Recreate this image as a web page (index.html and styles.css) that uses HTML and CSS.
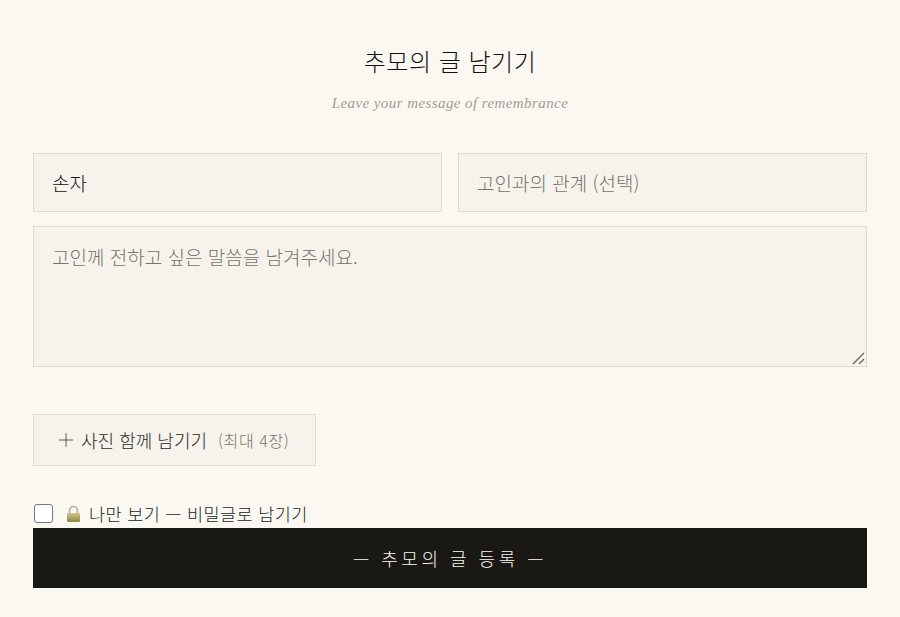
FILE: index.html
```html
<!DOCTYPE html>
<html lang="ko">
<head>
    <meta charset="UTF-8">
    <meta name="viewport" content="width=device-width, initial-scale=1.0">
    <title>추모의 글 남기기</title>
    <link rel="stylesheet" href="styles.css">
</head>
<body>
    <section class="guestbook">
        <h2 class="title">추모의 글 남기기</h2>
        <p class="subtitle">Leave your message of remembrance</p>
        <form class="form">
            <div class="row">
                <input class="field" type="text" value="손자" placeholder="이름">
                <input class="field" type="text" placeholder="고인과의 관계 (선택)">
            </div>
            <div class="message-wrap">
                <textarea class="field message" placeholder="고인께 전하고 싶은 말씀을 남겨주세요."></textarea>
                <svg class="grip" width="13" height="13" viewBox="0 0 13 13"><path d="M1 12L12 1M7 12l5-5" stroke="#66635c" stroke-width="1.3" fill="none"/></svg>
            </div>
            <button class="photo-btn" type="button">
                <svg class="plus" width="14" height="14" viewBox="0 0 14 14"><path d="M7 0v14M0 7h14" stroke="#5e5a52" stroke-width="1" fill="none"/></svg>
                <span>사진 함께 남기기</span>
                <span class="photo-note">(최대 4장)</span>
            </button>
            <label class="secret">
                <input class="secret-check" type="checkbox">
                <svg class="lock" width="15" height="18" viewBox="0 0 15 18">
                    <defs>
                        <linearGradient id="lockBody" x1="0" y1="0" x2="0" y2="1">
                            <stop offset="0" stop-color="#cfc78a"/>
                            <stop offset="1" stop-color="#8f8748"/>
                        </linearGradient>
                    </defs>
                    <path d="M3.6 8V5.4a3.9 3.9 0 0 1 7.8 0V8" fill="none" stroke="#b5b5ad" stroke-width="1.7"/>
                    <rect x="1" y="8" width="13" height="9" rx="1" fill="url(#lockBody)"/>
                </svg>
                <span>나만 보기 — 비밀글로 남기기</span>
            </label>
            <button class="submit" type="submit">— 추모의 글 등록 —</button>
        </form>
    </section>
</body>
</html>
```

FILE: styles.css
```css
* {
    box-sizing: border-box;
}
body {
    margin: 0;
    background-color: #fbf8f2;
    color: #141210;
    font-family: "Noto Sans CJK KR", "Liberation Serif", sans-serif;
    font-weight: 300;
}
.guestbook {
    padding: 43px 33px 29px;
}
.title {
    margin: 0;
    font-size: 24px;
    line-height: 36px;
    font-weight: 300;
    letter-spacing: 0.5px;
    text-align: center;
}
.subtitle {
    margin: 14px 0 0;
    font-family: "Liberation Serif", serif;
    font-style: italic;
    font-size: 15px;
    line-height: 20px;
    letter-spacing: 0.42px;
    color: #a19c92;
    text-align: center;
}
.form {
    display: flex;
    flex-direction: column;
    margin-top: 40px;
}
.row {
    display: flex;
    gap: 16px;
}
.field {
    flex: 1;
    min-width: 0;
    height: 59px;
    padding: 0 18px;
    background-color: #f6f3ec;
    border: 1px solid #e0dbcf;
    border-radius: 0;
    outline: none;
    color: #141210;
    font-family: inherit;
    font-weight: 300;
    font-size: 19px;
}
.field::placeholder {
    color: #77736b;
    opacity: 1;
}
.message-wrap {
    position: relative;
    margin-top: 14px;
}
.message {
    display: block;
    width: 100%;
    height: 141px;
    padding: 15px 18px;
    line-height: 30px;
    resize: none;
}
.grip {
    position: absolute;
    right: 2px;
    bottom: 2px;
    pointer-events: none;
}
.photo-btn {
    display: flex;
    align-items: center;
    align-self: flex-start;
    width: 283px;
    height: 52px;
    margin-top: 47px;
    padding: 0 25px;
    background-color: #f6f3ec;
    border: 1px solid #e0dbcf;
    color: #2c2a25;
    font-family: inherit;
    font-weight: 300;
    font-size: 18px;
    cursor: pointer;
}
.plus {
    flex: none;
    margin-right: 8px;
}
.photo-note {
    margin-left: 11px;
    color: #77736b;
    font-size: 16px;
    letter-spacing: 0.6px;
}
.secret {
    display: flex;
    align-items: center;
    height: 25px;
    margin-top: 35px;
    color: #201e1a;
    font-size: 17.5px;
    letter-spacing: 0.4px;
}
.secret-check {
    appearance: none;
    width: 19px;
    height: 19px;
    margin: 0 0 0 1px;
    background-color: #fff;
    border: 1.5px solid #777;
    border-radius: 3px;
}
.lock {
    margin: 0 8px 0 13px;
}
.submit {
    height: 60px;
    margin-top: 2px;
    background-color: #1a1814;
    border: none;
    color: #fbf8f2;
    font-family: inherit;
    font-weight: 300;
    font-size: 18px;
    letter-spacing: 3.5px;
    cursor: pointer;
}
```
